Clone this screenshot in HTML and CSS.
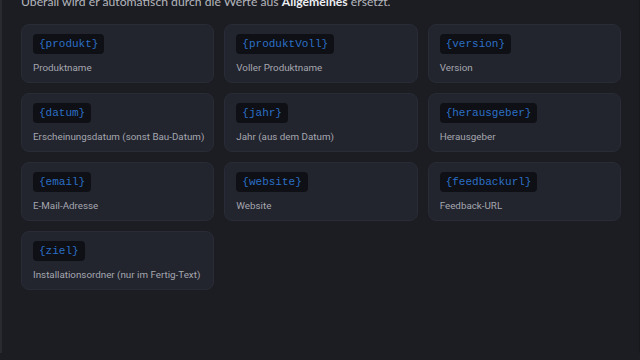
FILE: index.html
```html
<!DOCTYPE html>
<html lang="de">

<head>
    <meta charset="UTF-8">
    <meta name="viewport" content="width=device-width, initial-scale=1.0">
    <title>Platzhalter</title>
    <link rel="stylesheet" href="styles.css">
</head>

<body>
    <div class="panel">
        <p class="intro">Überall wird er automatisch durch die Werte aus <strong>Allgemeines</strong> ersetzt.</p>
        <div class="grid">
            <div class="card">
                <code class="tag">{produkt}</code>
                <div class="desc">Produktname</div>
            </div>
            <div class="card">
                <code class="tag">{produktVoll}</code>
                <div class="desc">Voller Produktname</div>
            </div>
            <div class="card">
                <code class="tag">{version}</code>
                <div class="desc">Version</div>
            </div>
            <div class="card">
                <code class="tag">{datum}</code>
                <div class="desc">Erscheinungsdatum (sonst Bau-Datum)</div>
            </div>
            <div class="card">
                <code class="tag">{jahr}</code>
                <div class="desc">Jahr (aus dem Datum)</div>
            </div>
            <div class="card">
                <code class="tag">{herausgeber}</code>
                <div class="desc">Herausgeber</div>
            </div>
            <div class="card">
                <code class="tag">{email}</code>
                <div class="desc">E-Mail-Adresse</div>
            </div>
            <div class="card">
                <code class="tag">{website}</code>
                <div class="desc">Website</div>
            </div>
            <div class="card">
                <code class="tag">{feedbackurl}</code>
                <div class="desc">Feedback-URL</div>
            </div>
            <div class="card">
                <code class="tag">{ziel}</code>
                <div class="desc">Installationsordner (nur im Fertig-Text)</div>
            </div>
        </div>
    </div>
</body>

</html>
```

FILE: styles.css
```css
html, body {
    height: 100%;
}

body {
    margin: 0;
    background-color: #1c1d22;
    font-family: Lato, "Noto Sans", sans-serif;
    overflow: hidden;
}

.panel {
    height: 100%;
    box-sizing: border-box;
    border-left: 2px solid #2a2b31;
    border-right: 1px solid #17181c;
    padding: 0 19px;
}

.intro {
    margin: -7px 0 0 0;
    font-size: 12.2px;
    line-height: 17px;
    color: #b4b6bd;
}

.intro strong {
    color: #eceef2;
    font-weight: 700;
}

.grid {
    display: grid;
    grid-template-columns: repeat(3, minmax(0, 1fr));
    gap: 10px;
    margin-top: 14px;
    width: 600px;
}

.card {
    display: flex;
    flex-direction: column;
    align-items: flex-start;
    height: 59px;
    box-sizing: border-box;
    padding: 9px 4px 0 11px;
    background-color: #22242e;
    border: 1px solid #292b36;
    border-radius: 8px;
}

.tag {
    background-color: #0e1015;
    color: #2c6fc6;
    font-family: "Liberation Mono", monospace;
    font-size: 11px;
    line-height: 14px;
    padding: 3px 6px;
    border-radius: 4px;
}

.desc {
    margin-top: 7px;
    font-family: Roboto, "Noto Sans", sans-serif;
    font-size: 9.8px;
    line-height: 14px;
    color: #a5a7af;
    white-space: nowrap;
}
```
